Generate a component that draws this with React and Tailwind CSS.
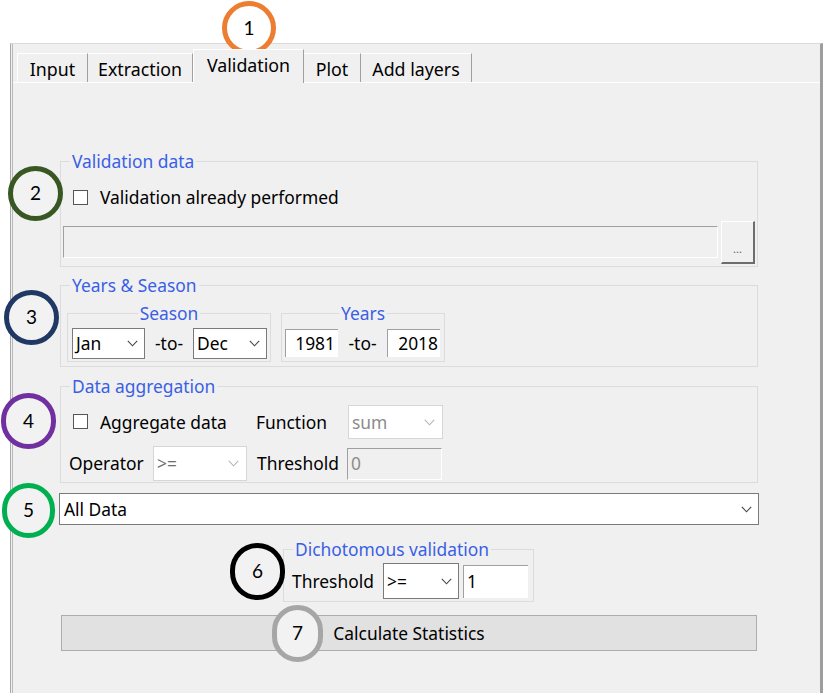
import React from "react";

function Chevron({ color = "#444" }) {
  return (
    <svg width="11" height="7" viewBox="0 0 11 7" className="shrink-0">
      <polyline points="0.8,0.8 5.5,5.8 10.2,0.8" fill="none" stroke={color} strokeWidth="1.1" />
    </svg>
  );
}

function Circle({ cls, n }) {
  return (
    <div className={"absolute rounded-full border-[5px] flex items-center justify-center font-['Lato',sans-serif] text-[19px] text-black " + cls}>
      {n}
    </div>
  );
}

function Checkbox() {
  return <div className="w-[15px] h-[15px] border border-[#555] bg-white shrink-0" />;
}

export default function App() {
  return (
    <div className="w-[824px] h-[693px] bg-white relative overflow-hidden font-['Noto_Sans',sans-serif] text-[17.4px] text-black">
      <div className="h-[43px]" />
      {/* panel */}
      <div className="ml-[10px] w-[813px] h-[650px] bg-[#f0f0f0] border-t border-t-[#dadada] border-l border-l-[#a9a9a9] border-r-[3px] border-r-[#9d9d9d] pl-[1px] flex">
        <div className="flex-1 border-l border-l-[#b9b9b9] flex flex-col">
          {/* tabs */}
          <div className="h-[38px] flex items-end pl-[4px]">
            <div className="w-[71px] h-[29px] border-t border-l border-white border-r border-r-[#a0a0a0] flex items-center justify-center pt-[2px] text-[17.8px]">Input</div>
            <div className="w-[105px] h-[29px] border-t border-white border-r border-r-[#a0a0a0] flex items-center justify-center pt-[2px] text-[17.8px]">Extraction</div>
            <div className="w-[111px] h-[34px] -mb-px relative z-10 bg-[#f0f0f0] border-t border-l border-white border-r border-r-[#a0a0a0] flex items-center justify-center pb-[3px] text-[17.8px]">Validation</div>
            <div className="w-[57px] h-[29px] border-t border-white border-r border-r-[#a0a0a0] flex items-center justify-center pt-[2px] text-[17.8px]">Plot</div>
            <div className="w-[111px] h-[29px] border-t border-white border-r border-r-[#a0a0a0] flex items-center justify-center pt-[2px] text-[17.8px]">Add layers</div>
          </div>
          {/* pane */}
          <div className="flex-1 border-t border-t-white flex flex-col pl-[47px]">
            {/* Validation data */}
            <fieldset className="mt-[68px] w-[698px] border border-[#dcdcdc] pb-[2px]">
              <legend className="ml-[9px] px-[2px] leading-[20px] text-[#3a5fe5]">Validation data</legend>
              <div className="mt-[16px] h-[20px] flex items-center">
                <div className="ml-[12px]"><Checkbox /></div>
                <span className="ml-[12px]">Validation already performed</span>
              </div>
              <div className="mt-[14px] h-[43px] flex">
                <div className="ml-[2px] mt-[5px] w-[655px] h-[32px] bg-[#f0f0f0] border-t border-l border-[#a0a0a0] border-b border-r border-b-white border-r-white" />
                <div className="ml-[3px] w-[34px] h-[43px] bg-[#f0f0f0] border-t border-l border-white border-b-2 border-r-2 border-b-[#6d6d6d] border-r-[#6d6d6d] flex items-end justify-center pb-[8px]">
                  <span className="text-[11px] leading-none text-[#5b5b8a]">...</span>
                </div>
              </div>
            </fieldset>

            {/* Years & Season */}
            <fieldset className="mt-[8px] w-[698px] border border-[#dcdcdc] pb-[4px]">
              <legend className="ml-[9px] px-[2px] leading-[20px] text-[#3a5fe5]">Years &amp; Season</legend>
              <div className="mt-[8px] ml-[6px] flex">
                <fieldset className="w-[204px] border border-[#dcdcdc] pb-[2px]">
                  <legend className="mx-auto px-[2px] leading-[20px] text-[#3a5fe5]">Season</legend>
                  <div className="mt-[5px] h-[31px] flex items-center">
                    <div className="ml-[4px] w-[73px] h-[31px] bg-white border border-[#7a7a7a] flex items-center justify-between pl-[3px] pr-[6px]">
                      <span>Jan</span>
                      <Chevron />
                    </div>
                    <span className="w-[48px] text-center">-to-</span>
                    <div className="w-[74px] h-[31px] bg-white border border-[#7a7a7a] flex items-center justify-between pl-[3px] pr-[6px]">
                      <span>Dec</span>
                      <Chevron />
                    </div>
                  </div>
                </fieldset>
                <fieldset className="ml-[10px] w-[164px] border border-[#dcdcdc] pb-[4px]">
                  <legend className="mx-auto px-[2px] leading-[20px] text-[#3a5fe5]">Years</legend>
                  <div className="mt-[6px] h-[28px] flex items-center">
                    <div className="ml-[3px] w-[53px] h-[28px] bg-white border-t border-l border-[#a0a0a0] flex items-center justify-end pr-[3px]">1981</div>
                    <span className="w-[49px] text-center">-to-</span>
                    <div className="w-[53px] h-[28px] bg-white border-t border-l border-[#a0a0a0] flex items-center justify-end pr-[2px]">2018</div>
                  </div>
                </fieldset>
              </div>
            </fieldset>

            {/* Data aggregation */}
            <fieldset className="mt-[9px] w-[698px] border border-[#dcdcdc] pb-[1px]">
              <legend className="ml-[9px] px-[2px] leading-[20px] text-[#3a5fe5]">Data aggregation</legend>
              <div className="mt-[9px] h-[34px] flex items-center">
                <div className="w-[195px] flex items-center">
                  <div className="ml-[12px]"><Checkbox /></div>
                  <span className="ml-[12px]">Aggregate data</span>
                </div>
                <span className="w-[92px]">Function</span>
                <div className="w-[95px] h-[34px] bg-white border border-[#d6d6d6] flex items-center justify-between pl-[3px] pr-[7px] text-[#8c8c8c]">
                  <span>sum</span>
                  <Chevron color="#b4b4b4" />
                </div>
              </div>
              <div className="mt-[7px] h-[35px] flex items-center">
                <span className="ml-[8px] w-[84px]">Operator</span>
                <div className="w-[94px] h-[35px] bg-white border border-[#d6d6d6] flex items-center justify-between pl-[3px] pr-[7px] text-[#6d6d6d]">
                  <span>&gt;=</span>
                  <Chevron color="#b4b4b4" />
                </div>
                <span className="ml-[10px] w-[90px]">Threshold</span>
                <div className="w-[95px] h-[32px] bg-[#f0f0f0] border-t border-l border-[#a0a0a0] border-b border-r border-b-white border-r-white flex items-center pl-[3px] text-[#8c8c8c]">0</div>
              </div>
            </fieldset>

            {/* All Data combo */}
            <div className="mt-[10px] -ml-px w-[700px] h-[32px] bg-white border border-[#7a7a7a] flex items-center justify-between pl-[4px] pr-[6px]">
              <span>All Data</span>
              <Chevron />
            </div>

            {/* Dichotomous */}
            <fieldset className="mt-[14px] ml-[223px] w-[251px] border border-[#dcdcdc] pb-[2px]">
              <legend className="ml-[9px] px-[2px] leading-[20px] text-[#3a5fe5]">Dichotomous validation</legend>
              <div className="mt-[4px] h-[36px] flex items-center">
                <span className="ml-[8px] w-[91px]">Threshold</span>
                <div className="w-[76px] h-[36px] bg-white border border-[#7a7a7a] flex items-center justify-between pl-[3px] pr-[6px]">
                  <span>&gt;=</span>
                  <Chevron />
                </div>
                <div className="ml-[4px] w-[65px] h-[33px] bg-white border-t border-l border-[#a0a0a0] flex items-center pl-[3px]">1</div>
              </div>
            </fieldset>

            {/* Button */}
            <div className="mt-[13px] ml-[1px] w-[696px] h-[36px] bg-[#e1e1e1] border border-[#adadad] flex items-center justify-center">
              <span>Calculate Statistics</span>
            </div>
          </div>
        </div>
      </div>

      {/* annotation circles */}
      <Circle cls="left-[222px] top-[1px] w-[54px] h-[54px] border-[#ed7d31] bg-white" n="1" />
      <Circle cls="left-[8px] top-[166px] w-[55px] h-[55px] border-[#385723] bg-[#f2f2f2]" n="2" />
      <Circle cls="left-[4px] top-[290px] w-[55px] h-[55px] border-[#1f3864] bg-[#f2f2f2]" n="3" />
      <Circle cls="left-[1px] top-[393px] w-[55px] h-[56px] border-[#7030a0] bg-[#f2f2f2]" n="4" />
      <Circle cls="left-[2px] top-[483px] w-[53px] h-[55px] border-[#00b050] bg-[#f2f2f2]" n="5" />
      <Circle cls="left-[230px] top-[543px] w-[55px] h-[57px] border-[#000000] bg-[#f2f2f2]" n="6" />
      <Circle cls="left-[272px] top-[605px] w-[51px] h-[57px] border-[#a6a6a6] bg-[#f2f2f2]" n="7" />
    </div>
  );
}
